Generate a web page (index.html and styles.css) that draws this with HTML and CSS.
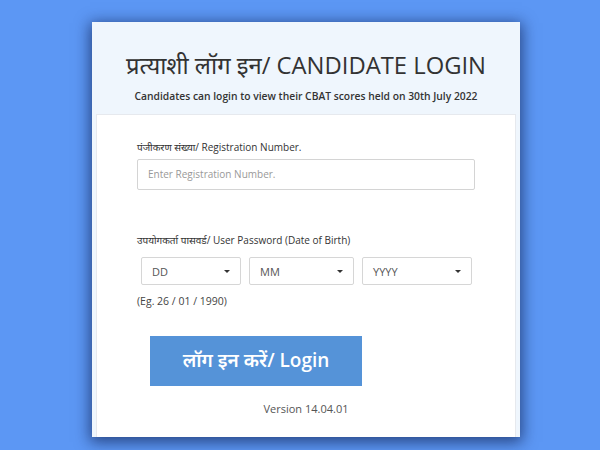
FILE: index.html
```html
<!DOCTYPE html>
<html>
<head>
<meta charset="utf-8">
<link rel="stylesheet" href="styles.css">
</head>
<body>
<div class="stage">
  <div class="card">
    <div class="head">
      <h1 class="title">प्रत्याशी लॉग इन/ CANDIDATE LOGIN</h1>
      <p class="sub">Candidates can login to view their CBAT scores held on 30th July 2022</p>
    </div>
    <div class="panel">
      <label class="lbl">पंजीकरण संख्या/ Registration Number.</label>
      <div class="input">Enter Registration Number.</div>
      <label class="lbl lbl-pw">उपयोगकर्ता पासवर्ड/ User Password (Date of Birth)</label>
      <div class="selects">
        <div class="sel"><span>DD</span><i class="caret"></i></div>
        <div class="sel"><span>MM</span><i class="caret"></i></div>
        <div class="sel"><span>YYYY</span><i class="caret"></i></div>
      </div>
      <div class="eg">(Eg. 26 / 01 / 1990)</div>
      <div class="btn">लॉग इन करें/ Login</div>
      <div class="ver">Version 14.04.01</div>
    </div>
  </div>
</div>
</body>
</html>
```
FILE: styles.css
```css
html, body {
  margin: 0;
  padding: 0;
}
body {
  width: 600px;
  height: 450px;
  overflow: hidden;
  background: #5c97f4;
  font-family: "Open Sans", "Noto Sans Devanagari", "Lohit Devanagari", "Noto Sans", sans-serif;
  color: #333;
}
.stage {
  padding: 22px 0 0 92px;
}
.card {
  width: 428px;
  height: 415px;
  background: #eff6fd;
  box-shadow: 0 3px 14px 2px rgba(10, 25, 70, 0.65);
  padding: 0 4px 0 4px;
  box-sizing: border-box;
  display: flex;
  flex-direction: column;
}
.head {
  height: 92px;
  display: flex;
  flex-direction: column;
  align-items: center;
}
.title {
  margin: 28px 0 0;
  font-size: 23.8px;
  font-weight: 400;
  line-height: 30px;
  color: #333;
  white-space: nowrap;
}
.sub {
  margin: 9px 0 0;
  font-size: 10.3px;
  font-weight: 600;
  line-height: 14px;
  color: #333;
  white-space: nowrap;
}
.panel {
  flex: 1;
  background: #fff;
  border: 1px solid #e6e9ee;
  border-bottom: none;
  padding: 25px 0 0 40px;
  display: flex;
  flex-direction: column;
}
.lbl {
  font-size: 10px;
  line-height: 14px;
  color: #333;
}
.input {
  margin-top: 5px;
  width: 338px;
  height: 31px;
  box-sizing: border-box;
  border: 1px solid #d4d4d4;
  border-radius: 2px;
  padding: 0 10px;
  font-size: 10px;
  line-height: 29px;
  color: #999;
}
.lbl-pw {
  margin-top: 43px;
}
.selects {
  margin-top: 10px;
  margin-left: 4px;
  display: grid;
  grid-template-columns: 100px 105px 110px;
  column-gap: 8px;
}
.sel {
  height: 28px;
  box-sizing: border-box;
  border: 1px solid #d6d6d6;
  border-radius: 2px;
  display: flex;
  align-items: center;
  justify-content: space-between;
  padding: 0 10px 0 10px;
  font-size: 11px;
  color: #555;
}
.caret {
  width: 0;
  height: 0;
  border-left: 3px solid transparent;
  border-right: 3px solid transparent;
  border-top: 3px solid #333;
}
.eg {
  margin-top: 9px;
  font-size: 10.5px;
  line-height: 14px;
  color: #444;
}
.btn {
  margin-top: 28px;
  margin-left: 13px;
  width: 212px;
  height: 50px;
  background: #5593d8;
  color: #fff;
  font-size: 19px;
  font-weight: 600;
  display: flex;
  align-items: center;
  justify-content: center;
  white-space: nowrap;
}
.ver {
  margin-top: 16px;
  align-self: center;
  margin-left: -40px;
  font-size: 11px;
  line-height: 14px;
  color: #555;
}
```
